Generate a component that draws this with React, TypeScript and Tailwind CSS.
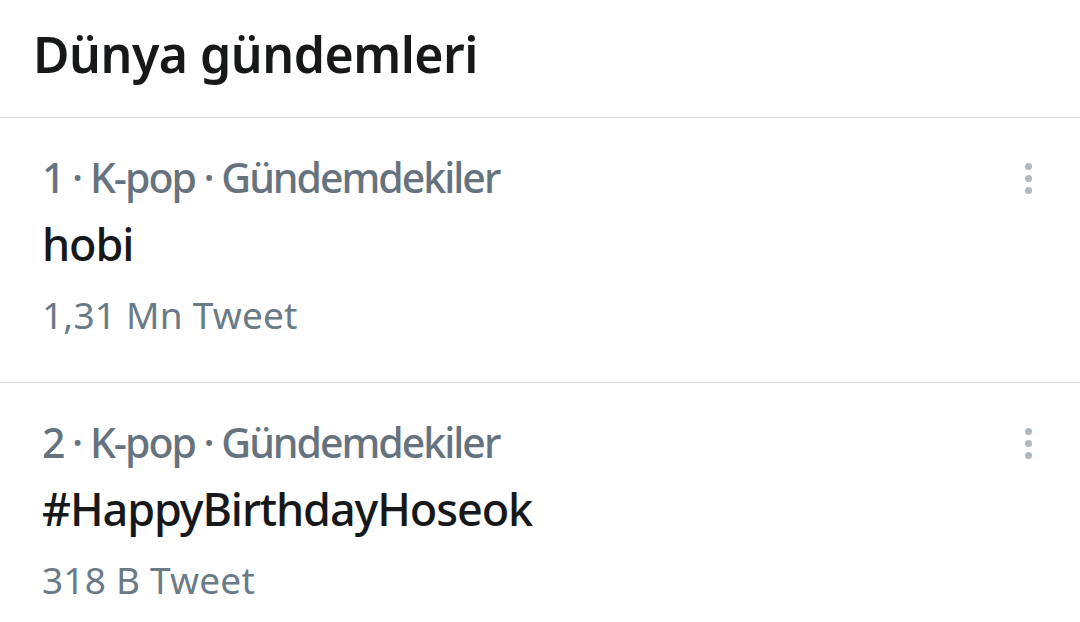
export default function App() {
  const rows = [
    { meta: "1 · K-pop · Gündemdekiler", title: "hobi", count: "1,31 Mn Tweet" },
    { meta: "2 · K-pop · Gündemdekiler", title: "#HappyBirthdayHoseok", count: "318 B Tweet" },
  ];
  return (
    <div className="w-[1080px] h-[622px] bg-white overflow-hidden" style={{ fontFamily: '"Noto Sans", sans-serif' }}>
      <div className="h-[118px] border-b-[1.5px] border-[#d3d9dc] pl-[33px] pt-[22px]">
        <div className="text-[50px] leading-[64px] font-semibold text-[#16181a] tracking-[-0.5px]">Dünya gündemleri</div>
      </div>
      {rows.map((r, i) => (
        <div key={i} className="h-[265px] border-b-[1.5px] border-[#d3d9dc] flex justify-between pl-[42px] pr-[48px] pt-[29px]">
          <div className="flex flex-col">
            <div className="text-[41px] leading-[60px] font-medium text-[#66737f] tracking-[-2px]">{r.meta}</div>
            <div className="text-[45px] leading-[74px] font-medium text-[#16181a] tracking-[-1.1px]">{r.title}</div>
            <div className="mt-[5px] text-[37px] leading-[58px] text-[#6b7a87] tracking-[0.2px]">{r.count}</div>
          </div>
          <div className="flex flex-col gap-[5px] pt-[16px]">
            <div className="w-[7px] h-[7px] rounded-full bg-[#b0b7be]" />
            <div className="w-[7px] h-[7px] rounded-full bg-[#b0b7be]" />
            <div className="w-[7px] h-[7px] rounded-full bg-[#b0b7be]" />
          </div>
        </div>
      ))}
    </div>
  );
}
